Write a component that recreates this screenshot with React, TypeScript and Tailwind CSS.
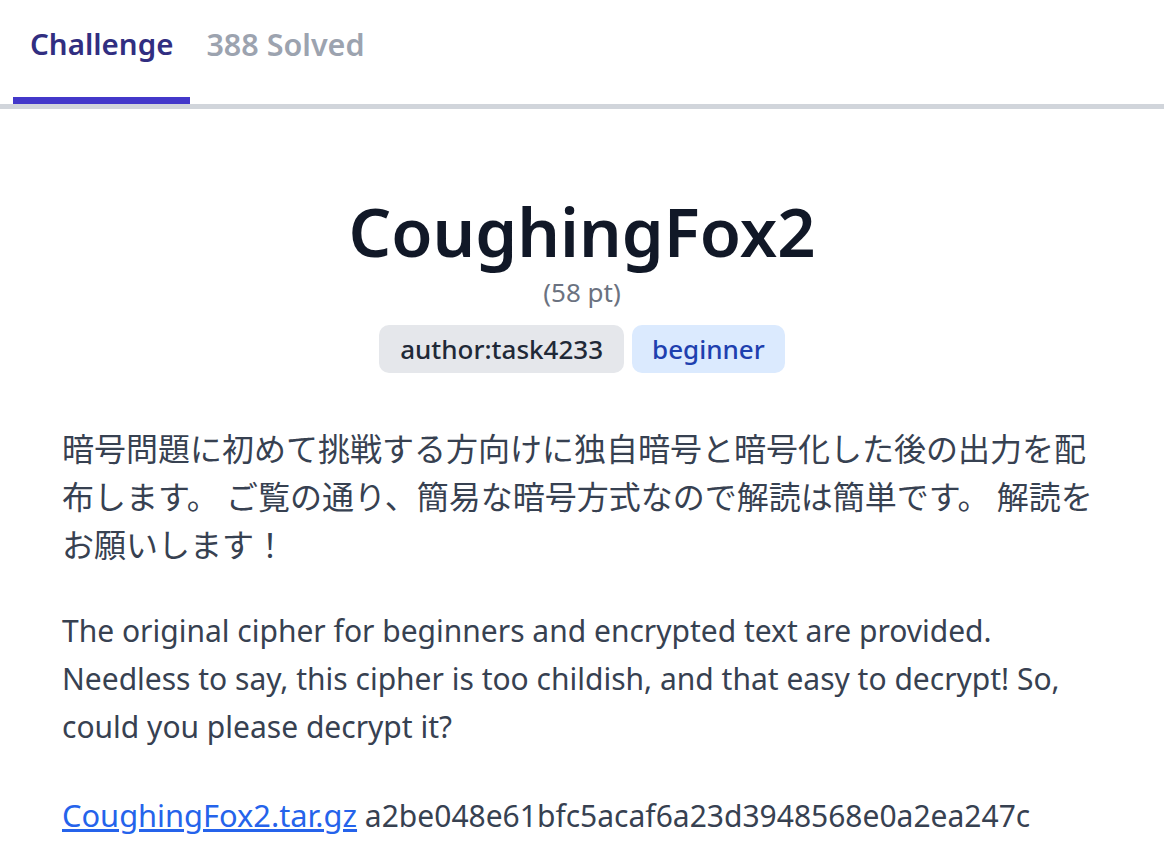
export default function App() {
  return (
    <div className="min-h-screen bg-white font-['Noto_Sans','Noto_Sans_CJK_JP',sans-serif]">
      {/* tabs */}
      <div className="flex border-b-[5px] border-[#d1d5db] pl-[13px]">
        <div className="border-b-[7px] border-[#4338ca] px-[17px] pt-[24px] pb-[33px] text-[29.5px] font-semibold leading-[40px] text-[#312e81]">
          Challenge
        </div>
        <div className="border-b-[7px] border-transparent px-[16px] pt-[24px] pb-[33px] text-[30.5px] font-semibold leading-[40px] text-[#9ca3af]">
          388 Solved
        </div>
      </div>

      <div className="px-[62px] pt-[82px]">
        <h1 className="text-center text-[67px] font-semibold leading-[80px] text-[#111827]">
          CoughingFox2
        </h1>
        <div className="mt-[5px] text-center text-[26px] leading-[32px] text-[#6b7280]">(58 pt)</div>

        <div className="mt-[17px] flex justify-center gap-2">
          <span className="rounded-[10px] bg-[#e5e7eb] px-[21px] text-[26px] font-medium leading-[48px] text-[#1f2937]">
            author:task4233
          </span>
          <span className="rounded-[10px] bg-[#dbeafe] px-[20px] text-[26px] font-medium leading-[48px] text-[#1e40af]">
            beginner
          </span>
        </div>

        <p className="mt-[50px] font-['Noto_Sans_CJK_JP',sans-serif] text-[32px] leading-[48px] text-[#374151]">
          暗号問題に初めて挑戦する方向けに独自暗号と暗号化した後の出力を配布します。 ご覧の通り、簡易な暗号方式なので解読は簡単です。 解読をお願いします！
        </p>

        <p className="mt-[40px] text-[30px] leading-[48px] text-[#374151]">
          The original cipher for beginners and encrypted text are provided. Needless to say, this cipher is too childish, and that easy to decrypt! So, could you please decrypt it?
        </p>

        <p className="mt-[40px] text-[30px] leading-[48px] text-[#374151]">
          <a href="#" className="text-[30.8px] text-[#2563eb] underline">
            CoughingFox2.tar.gz
          </a>{" "}
          a2be048e61bfc5acaf6a23d3948568e0a2ea247c
        </p>
      </div>
    </div>
  );
}
